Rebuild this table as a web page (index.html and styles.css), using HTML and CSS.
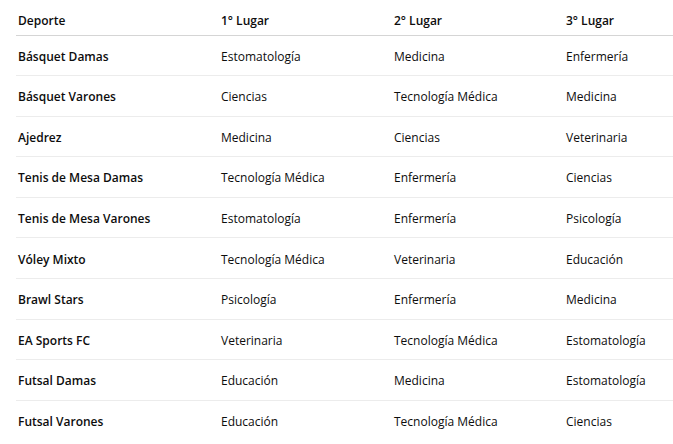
FILE: index.html
```html
<!DOCTYPE html>
<html lang="es">
<head>
<meta charset="utf-8">
<link rel="stylesheet" href="styles.css">
</head>
<body>
<div class="wrap">
<table class="results">
  <colgroup>
    <col class="c1"><col class="c2"><col class="c3"><col class="c4">
  </colgroup>
  <thead>
    <tr><th>Deporte</th><th>1° Lugar</th><th>2° Lugar</th><th>3° Lugar</th></tr>
  </thead>
  <tbody>
    <tr><td class="sport">Básquet Damas</td><td>Estomatología</td><td>Medicina</td><td>Enfermería</td></tr>
    <tr><td class="sport">Básquet Varones</td><td>Ciencias</td><td>Tecnología Médica</td><td>Medicina</td></tr>
    <tr><td class="sport">Ajedrez</td><td>Medicina</td><td>Ciencias</td><td>Veterinaria</td></tr>
    <tr><td class="sport">Tenis de Mesa Damas</td><td>Tecnología Médica</td><td>Enfermería</td><td>Ciencias</td></tr>
    <tr><td class="sport">Tenis de Mesa Varones</td><td>Estomatología</td><td>Enfermería</td><td>Psicología</td></tr>
    <tr><td class="sport">Vóley Mixto</td><td>Tecnología Médica</td><td>Veterinaria</td><td>Educación</td></tr>
    <tr><td class="sport">Brawl Stars</td><td>Psicología</td><td>Enfermería</td><td>Medicina</td></tr>
    <tr><td class="sport">EA Sports FC</td><td>Veterinaria</td><td>Tecnología Médica</td><td>Estomatología</td></tr>
    <tr><td class="sport">Futsal Damas</td><td>Educación</td><td>Medicina</td><td>Estomatología</td></tr>
    <tr><td class="sport">Futsal Varones</td><td>Educación</td><td>Tecnología Médica</td><td>Ciencias</td></tr>
  </tbody>
</table>
</div>
</body>
</html>
```
FILE: styles.css
```css
html, body {
  margin: 0;
  padding: 0;
  background: #ffffff;
}
body {
  font-family: "Open Sans", "Noto Sans", sans-serif;
  font-size: 12px;
  color: #0d0d0d;
}
.wrap {
  padding: 0 0 0 16px;
  overflow: hidden;
}
.results {
  border-collapse: collapse;
  table-layout: fixed;
  width: 657px;
}
.c1 { width: 203px; }
.c2 { width: 173px; }
.c3 { width: 172px; }
.c4 { width: 109px; }
.results th,
.results td {
  text-align: left;
  padding: 0 0 0 2px;
  white-space: nowrap;
}
.results th {
  font-weight: 600;
  height: 35px;
  padding-top: 7px;
  padding-bottom: 0;
  vertical-align: middle;
  border-bottom: 1px solid #d5d5d5;
  box-sizing: border-box;
}
.results td {
  height: 38.1px;
  padding-top: 1.5px;
  box-sizing: content-box;
  border-bottom: 1px solid #ececec;
  vertical-align: middle;
}
.results tbody tr:last-child td {
  border-bottom: none;
}
.results .sport {
  font-weight: 600;
}
```
